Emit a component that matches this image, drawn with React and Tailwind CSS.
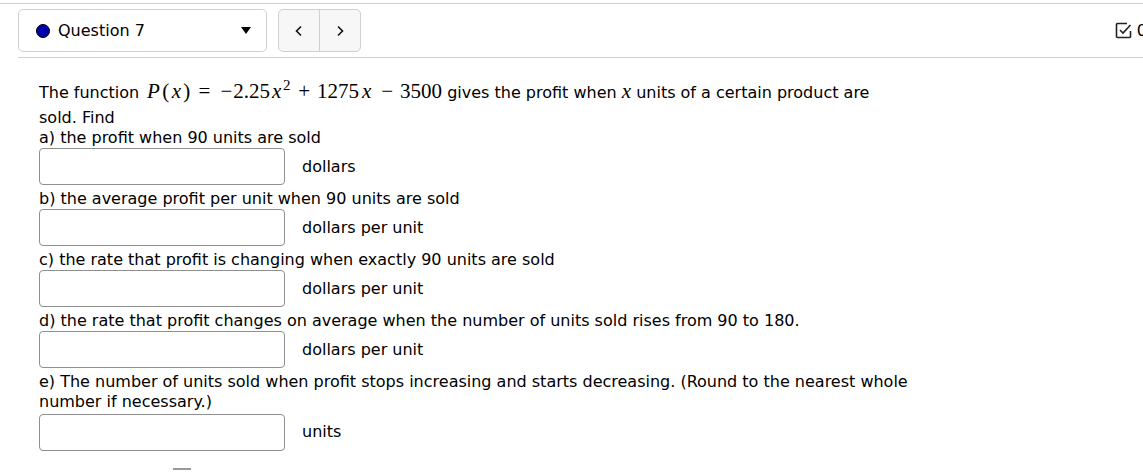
import React from "react";

const font = { fontFamily: '"DejaVu Sans", sans-serif' };
const serif = { fontFamily: '"Liberation Serif", "DejaVu Serif", serif' };

function Input({ extra = "" }) {
  return <div className={`w-[246px] h-[37px] border border-[#8f8f8f] rounded-[4px] bg-white shrink-0 ${extra}`} />;
}

function Row({ unit, extra }) {
  return (
    <div className="flex items-center">
      <Input extra={extra} />
      <span className="ml-[17px]">{unit}</span>
    </div>
  );
}

function G({ w, children, italic }) {
  return (
    <span className={`inline-block text-center ${w} ${italic ? "italic" : ""}`}>{children}</span>
  );
}

export default function App() {
  return (
    <div className="w-[1143px] h-[472px] bg-white text-black overflow-hidden text-[16px]" style={font}>
      <div className="pt-[3px]">
        <div className="border-t border-[#d0d0d0]" />
        <div className="ml-[18px] pt-[5px] pb-[5px] border-b border-[#d0d0d0] flex items-center">
          <div className="w-[249px] h-[43px] border border-[#d0d0d0] rounded-[5px] flex items-center pl-[17px] pr-[12px]">
            <span className="w-[14px] h-[14px] rounded-full bg-[#0000a8] border border-black" />
            <span className="ml-[8px] text-[16px]">Question 7</span>
            <span className="ml-auto mr-[3px] w-0 h-0 border-l-[5px] border-r-[5px] border-t-[7px] border-l-transparent border-r-transparent border-t-black" />
          </div>
          <div className="ml-[11px] w-[83px] h-[43px] border border-[#d0d0d0] rounded-[5px] bg-[#f7f7f7] flex">
            <div className="w-[41px] h-full border-r border-[#d0d0d0] flex items-center justify-center">
              <svg width="10" height="12" viewBox="0 0 10 12"><path d="M7 1.5 L2.5 6 L7 10.5" fill="none" stroke="#111" strokeWidth="1.6" /></svg>
            </div>
            <div className="flex-1 flex items-center justify-center">
              <svg width="10" height="12" viewBox="0 0 10 12"><path d="M3 1.5 L7.5 6 L3 10.5" fill="none" stroke="#111" strokeWidth="1.6" /></svg>
            </div>
          </div>
          <div className="ml-auto flex items-center">
            <svg width="17" height="17" viewBox="0 0 17 17" className="mr-[5px]">
              <path d="M12 1.5 H2.5 a1 1 0 0 0 -1 1 V14.5 a1 1 0 0 0 1 1 H14.5 a1 1 0 0 0 1 -1 V9" fill="none" stroke="#222" strokeWidth="1.6" />
              <path d="M5 8 L8 11 L15.5 3" fill="none" stroke="#222" strokeWidth="1.6" />
            </svg>
            <span className="mr-[-4px]">0</span>
          </div>
        </div>
      </div>

      <div className="pl-[39px] pt-[20px] leading-[20px]">
        <div className="leading-[27px] whitespace-nowrap">
          The function{" "}
          <span className="text-[21px]" style={serif}>
            <G w="w-[18px]" italic>P</G>
            <G w="w-[7px]">(</G>
            <G w="w-[14px]" italic>x</G>
            <G w="w-[6px]">)</G>
            <G w="w-[30px]">=</G>
            <G w="w-[14px]">−</G>
            <span>2.25</span>
            <G w="w-[13px]" italic>x</G>
            <span className="inline-block w-[8px] text-[15px] relative top-[-8px]">2</span>
            <G w="w-[26px]">+</G>
            <span>1275</span>
            <G w="w-[15px]" italic>x</G>
            <G w="w-[26px]">−</G>
            <span>3500</span>
          </span>{" "}
          gives the profit when{" "}
          <span className="italic text-[21px]" style={serif}>x</span>{" "}
          units of a certain product are
        </div>
        <div className="leading-[21px]">sold. Find</div>
        <div>a) the profit when 90 units are sold</div>
        <Row unit="dollars" />
        <div className="pt-[4px]">b) the average profit per unit when 90 units are sold</div>
        <Row unit="dollars per unit" />
        <div className="pt-[4px]">c) the rate that profit is changing when exactly 90 units are sold</div>
        <Row unit="dollars per unit" />
        <div className="pt-[4px]">d) the rate that profit changes on average when the number of units sold rises from 90 to 180.</div>
        <Row unit="dollars per unit" />
        <div className="pt-[4px] w-[890px]">
          e) The number of units sold when profit stops increasing and starts decreasing. (Round to the nearest whole number if necessary.)
        </div>
        <Row unit="units" extra="mt-[2px]" />
        <div className="ml-[134px] mt-[17px] w-[18px] h-[2px] bg-[#999]" />
      </div>
    </div>
  );
}
